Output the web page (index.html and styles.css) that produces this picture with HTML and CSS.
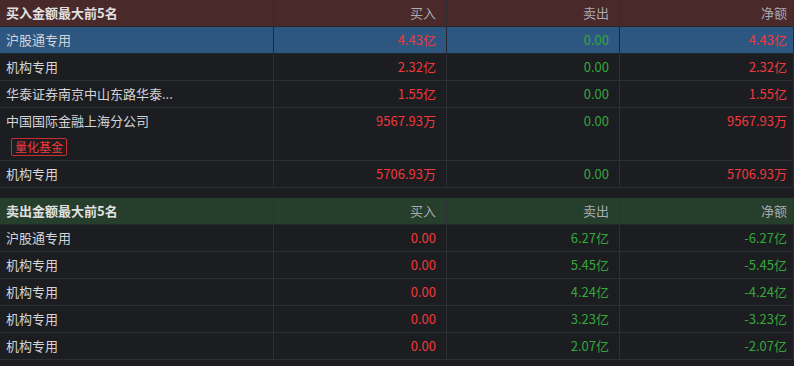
FILE: index.html
```html
<!DOCTYPE html>
<html lang="zh-CN">
<head>
    <meta charset="UTF-8">
    <meta name="viewport" content="width=device-width, initial-scale=1.0">
    <title>龙虎榜 | 营业部明细</title>
    <link rel="stylesheet" href="styles.css">
</head>
<body>
    <div class="board">
        <div class="section buy">
            <div class="row head">
                <div class="cell name">买入金额最大前5名</div>
                <div class="cell num">买入</div>
                <div class="cell num">卖出</div>
                <div class="cell num">净额</div>
            </div>
            <div class="row active">
                <div class="cell name">沪股通专用</div>
                <div class="cell num up">4.43亿</div>
                <div class="cell num down">0.00</div>
                <div class="cell num up">4.43亿</div>
            </div>
            <div class="row">
                <div class="cell name">机构专用</div>
                <div class="cell num up">2.32亿</div>
                <div class="cell num down">0.00</div>
                <div class="cell num up">2.32亿</div>
            </div>
            <div class="row">
                <div class="cell name">华泰证券南京中山东路华泰...</div>
                <div class="cell num up">1.55亿</div>
                <div class="cell num down">0.00</div>
                <div class="cell num up">1.55亿</div>
            </div>
            <div class="row tall">
                <div class="cell name">
                    <div class="line">中国国际金融上海分公司</div>
                    <span class="tag">量化基金</span>
                </div>
                <div class="cell num up">9567.93万</div>
                <div class="cell num down">0.00</div>
                <div class="cell num up">9567.93万</div>
            </div>
            <div class="row">
                <div class="cell name">机构专用</div>
                <div class="cell num up">5706.93万</div>
                <div class="cell num down">0.00</div>
                <div class="cell num up">5706.93万</div>
            </div>
        </div>

        <div class="section sell">
            <div class="row head">
                <div class="cell name">卖出金额最大前5名</div>
                <div class="cell num">买入</div>
                <div class="cell num">卖出</div>
                <div class="cell num">净额</div>
            </div>
            <div class="row">
                <div class="cell name">沪股通专用</div>
                <div class="cell num up">0.00</div>
                <div class="cell num down">6.27亿</div>
                <div class="cell num down">-6.27亿</div>
            </div>
            <div class="row">
                <div class="cell name">机构专用</div>
                <div class="cell num up">0.00</div>
                <div class="cell num down">5.45亿</div>
                <div class="cell num down">-5.45亿</div>
            </div>
            <div class="row">
                <div class="cell name">机构专用</div>
                <div class="cell num up">0.00</div>
                <div class="cell num down">4.24亿</div>
                <div class="cell num down">-4.24亿</div>
            </div>
            <div class="row">
                <div class="cell name">机构专用</div>
                <div class="cell num up">0.00</div>
                <div class="cell num down">3.23亿</div>
                <div class="cell num down">-3.23亿</div>
            </div>
            <div class="row">
                <div class="cell name">机构专用</div>
                <div class="cell num up">0.00</div>
                <div class="cell num down">2.07亿</div>
                <div class="cell num down">-2.07亿</div>
            </div>
        </div>
    </div>
</body>
</html>
```

FILE: styles.css
```css
:root {
    --bg-color: #1c1d21;
    --line-color: #2d2f34;
    --text-color: #d2d4d8;
    --head-text: #a9abae;
    --up-color: #f2383a;
    --down-color: #33a83a;
    --buy-head: #4a292a;
    --sell-head: #263e2c;
    --active-color: #2d5681;
}

* {
    margin: 0;
    padding: 0;
    box-sizing: border-box;
}

body {
    background-color: var(--bg-color);
    color: var(--text-color);
    font-family: "Microsoft YaHei", "Noto Sans CJK SC", "Noto Sans", sans-serif;
    font-size: 13px;
    width: 794px;
    height: 366px;
    overflow: hidden;
}

.section + .section {
    margin-top: 10px;
}

.row {
    display: grid;
    grid-template-columns: 274px 173px 173px 174px;
    height: 27px;
}

.cell {
    border-right: 1px solid var(--line-color);
    border-bottom: 1px solid var(--line-color);
    line-height: 26px;
    white-space: nowrap;
    overflow: hidden;
}

.name {
    padding-left: 6px;
}

.num {
    text-align: right;
    padding-right: 10px;
}

.num:last-child {
    padding-right: 6px;
}

.head .cell {
    color: var(--head-text);
    border-bottom-color: #27282c;
}

.head .name {
    color: #e0e0e0;
    font-weight: 700;
}

.buy .head {
    background-color: var(--buy-head);
}

.sell .head {
    background-color: var(--sell-head);
}

.active {
    background-color: var(--active-color);
}

.active .cell {
    border-right-color: #23262c;
    border-bottom-color: #23262c;
}

.tall {
    height: 53px;
}

.line {
    height: 30px;
}

.tag {
    display: inline-block;
    margin-left: 5px;
    padding: 0 3px;
    height: 18px;
    line-height: 16px;
    font-size: 12px;
    color: var(--up-color);
    border: 1px solid #c92f30;
    border-radius: 2px;
    vertical-align: top;
}

.up {
    color: var(--up-color);
}

.down {
    color: var(--down-color);
}
```
